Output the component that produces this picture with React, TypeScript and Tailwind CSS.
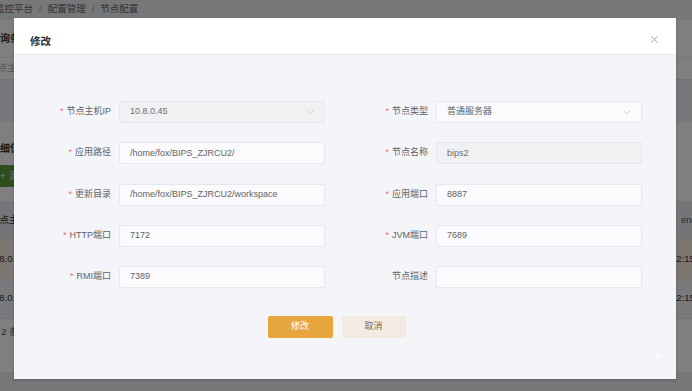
import React from 'react';

const FONT = "font-['Liberation_Sans','Noto_Sans_CJK_SC',sans-serif]";

interface FieldProps {
  label: string;
  value?: string;
  required?: boolean;
  disabled?: boolean;
  select?: boolean;
}

const Chevron: React.FC = () => (
  <svg width="8" height="5" viewBox="0 0 8 5" className="shrink-0">
    <path d="M0.5 0.5 L4 4 L7.5 0.5" fill="none" stroke="#c8cbd2" strokeWidth="0.8" />
  </svg>
);

const Field: React.FC<FieldProps> = ({ label, value = '', required = true, disabled, select }) => (
  <div className="flex items-center h-[22px]">
    <div className="w-[80px] text-right text-[9px] leading-[12px] text-[#606266] whitespace-nowrap -mt-[2px]">
      {required && <span className="text-[#f56c6c] mr-[3px]">*</span>}
      {label}
    </div>
    <div
      className={`ml-[8px] w-[206px] h-[22px] rounded-[2px] border flex items-center justify-between pl-[10px] pr-[10px] text-[9px] ${
        disabled
          ? 'bg-[#f0f1f3] border-[#e7e8ec] text-[#6b6e75]'
          : 'bg-[#fbfbfd] border-[#e6e8ee] text-[#606266]'
      }`}
    >
      <span className="whitespace-nowrap">{value}</span>
      {select && <Chevron />}
    </div>
  </div>
);

const fields: FieldProps[] = [
  { label: '节点主机IP', value: '10.8.0.45', disabled: true, select: true },
  { label: '节点类型', value: '普通服务器', select: true },
  { label: '应用路径', value: '/home/fox/BIPS_ZJRCU2/' },
  { label: '节点名称', value: 'bips2', disabled: true },
  { label: '更新目录', value: '/home/fox/BIPS_ZJRCU2/workspace' },
  { label: '应用端口', value: '8887' },
  { label: 'HTTP端口', value: '7172' },
  { label: 'JVM端口', value: '7689' },
  { label: 'RMI端口', value: '7389' },
  { label: '节点描述', value: '', required: false },
];

const BackgroundPage: React.FC = () => (
  <div className="w-[692px] h-[391px] overflow-hidden bg-[#eceef2] text-[9.5px] text-[#333]">
    {/* breadcrumb */}
    <div className="h-[18px] flex items-center -ml-[5px] text-[#666] whitespace-nowrap">
      监控平台 <span className="mx-[6px] text-[#999]">/</span> 配置管理
      <span className="mx-[6px] text-[#999]">/</span> 节点配置
    </div>

    {/* query card */}
    <div className="mt-[2px] bg-white h-[60px] border-b border-[#e2e4e8]">
      <div className="h-[38px] flex items-center -ml-[10px] font-bold text-[10px] whitespace-nowrap border-b border-[#eceef2]">
        查询条件
      </div>
      <div className="flex items-center h-[21px] -ml-[12px] text-[#b0b3b8] whitespace-nowrap">节点主机IP</div>
    </div>

    {/* detail card */}
    <div className="mt-[42px] bg-white h-[250px]">
      <div className="h-[40px] flex items-end pb-[6px] -ml-[10px] font-bold text-[10px] whitespace-nowrap">
        详细信息
      </div>
      <div className="mt-[3px] h-[22px] w-[60px] -ml-[8px] bg-[#5f9a3a] text-white flex items-center pl-[8px] gap-[4px] whitespace-nowrap">
        <span>+</span>
        <span>添加</span>
      </div>
      <div className="mt-[14px]">
        <div className="h-[38px] bg-[#e8eaee] flex items-center justify-between whitespace-nowrap">
          <span className="-ml-[10px]">节点主机IP</span>
          <span className="w-[11px] overflow-hidden text-[#555]">endTime</span>
        </div>
        <div className="h-[40px] bg-[#f7efe0] flex items-center justify-between whitespace-nowrap">
          <span className="-ml-[14px]">10.8.0.45</span>
          <span className="w-[21px] overflow-hidden">12:15:08</span>
        </div>
        <div className="h-[40px] bg-[#f2f3f6] flex items-center justify-between whitespace-nowrap border-b border-[#e5e7eb]">
          <span className="-ml-[14px]">10.8.0.46</span>
          <span className="w-[21px] overflow-hidden">12:15:08</span>
        </div>
        <div className="h-[26px] flex items-center -ml-[11px] text-[#555] whitespace-nowrap">共 2 条</div>
      </div>
    </div>
  </div>
);

export default function App() {
  return (
    <div className={`relative w-[692px] h-[391px] overflow-hidden ${FONT}`}>
      <BackgroundPage />
      <div className="absolute inset-0 bg-black/50" />

      {/* dialog */}
      <div className="absolute left-[14px] top-[18px] w-[662px] h-[361px] flex flex-col bg-[#f4f5f9] shadow-[0_1px_3px_rgba(0,0,0,0.2)]">
        <div className="relative h-[37px] shrink-0 bg-white border-b border-[#e6e8ee] pl-[16px] flex items-end">
          <span className="pb-[3px] text-[10.5px] leading-[20px] font-bold text-[#303133]">修改</span>
          <button className="absolute right-[18px] top-[18px] w-[7px] h-[7px] flex items-center justify-center">
            <svg width="7" height="7" viewBox="0 0 7 7">
              <path d="M0.5 0.5 L6.5 6.5 M6.5 0.5 L0.5 6.5" stroke="#8c97c4" strokeWidth="0.9" />
            </svg>
          </button>
        </div>

        <div className="relative flex-1 pt-[46px] pl-[17px]">
          <div className="w-[611px]">
            <div className="grid grid-cols-[294px_294px] gap-x-[23px] gap-y-[19.25px]">
              {fields.map((f) => (
                <Field key={f.label} {...f} />
              ))}
            </div>

            <div className="mt-[28px] flex justify-center gap-[9px]">
              <button className="w-[65px] h-[22px] rounded-[2px] bg-[#e8a63f] text-white text-[9px]">修改</button>
              <button className="w-[64px] h-[22px] rounded-[2px] bg-[#f3ebe2] text-[#8a6942] text-[9px]">取消</button>
            </div>
          </div>

          <span className="absolute left-[643px] top-[300px] w-[3px] h-[3px] bg-white" />
        </div>
      </div>
    </div>
  );
}
